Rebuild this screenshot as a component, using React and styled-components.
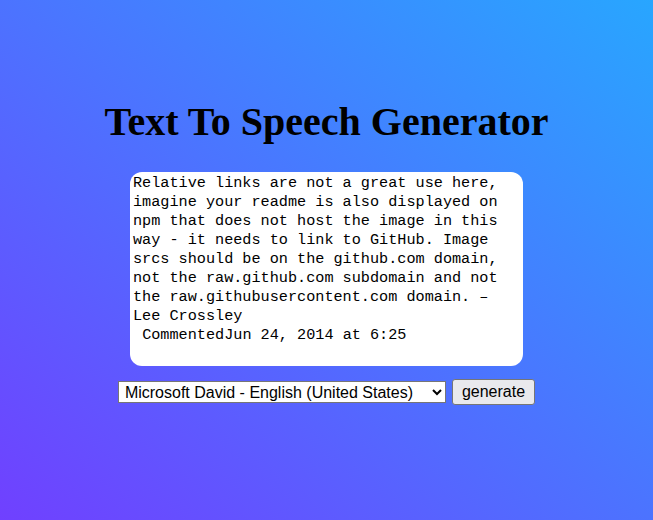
import React, { useState } from "react";
import styled, { createGlobalStyle } from "styled-components";

const GlobalStyle = createGlobalStyle`
  html, body {
    margin: 0;
    min-height: 100vh;
  }
  body {
    background: linear-gradient(to top right, #7040ff, #28a6ff);
    background-attachment: fixed;
    font-family: "Liberation Serif", "Times New Roman", serif;
  }
`;

const sample =
  "Relative links are not a great use here, imagine your readme is also displayed on npm that does not host the image in this way - it needs to link to GitHub. Image srcs should be on the github.com domain, not the raw.github.com subdomain and not the raw.githubusercontent.com domain. –\nLee Crossley\n CommentedJun 24, 2014 at 6:25";

const App = () => {
  const [text, setText] = useState(sample);

  return (
    <>
      <GlobalStyle />
      <Page>
        <Title>Text To Speech Generator</Title>
        <TextBox
          value={text}
          onChange={(e) => setText(e.target.value)}
          spellCheck
        />
        <Controls>
          <VoiceSelect defaultValue="david">
            <option value="david">Microsoft David - English (United States)</option>
            <option value="zira">Microsoft Zira - English (United States)</option>
          </VoiceSelect>
          <GenerateButton>generate</GenerateButton>
        </Controls>
      </Page>
    </>
  );
};

const Page = styled.div`
  display: flex;
  flex-direction: column;
  align-items: center;
  padding-top: 99px;
`;

const Title = styled.h1`
  margin: 0;
  font-family: "Liberation Serif", "Times New Roman", serif;
  font-size: 40px;
  font-weight: bold;
  line-height: 46px;
  color: #000;
`;

const TextBox = styled.textarea`
  box-sizing: border-box;
  margin-top: 27px;
  width: 393px;
  height: 194px;
  padding: 2px 3px;
  border: none;
  border-radius: 12px;
  background: #fff;
  color: #000;
  font-family: "Liberation Mono", "DejaVu Sans Mono", monospace;
  font-size: 15.2px;
  line-height: 19px;
  resize: none;
  outline: none;
  overflow: hidden;
`;

const Controls = styled.div`
  display: flex;
  align-items: center;
  gap: 6px;
  margin-top: 13px;
`;

const VoiceSelect = styled.select`
  box-sizing: border-box;
  width: 328px;
  height: 22px;
  padding: 0 2px;
  border: 1px solid #767676;
  border-radius: 0;
  background: #fff;
  color: #000;
  font-family: "Liberation Sans", Arial, sans-serif;
  font-size: 16px;
`;

const GenerateButton = styled.button`
  box-sizing: border-box;
  height: 26px;
  padding: 0 9px;
  border: 1px solid #767676;
  border-radius: 3px;
  background: #e9e9ed;
  color: #000;
  font-family: "Liberation Sans", Arial, sans-serif;
  font-size: 16px;
  cursor: pointer;
`;

export default App;
